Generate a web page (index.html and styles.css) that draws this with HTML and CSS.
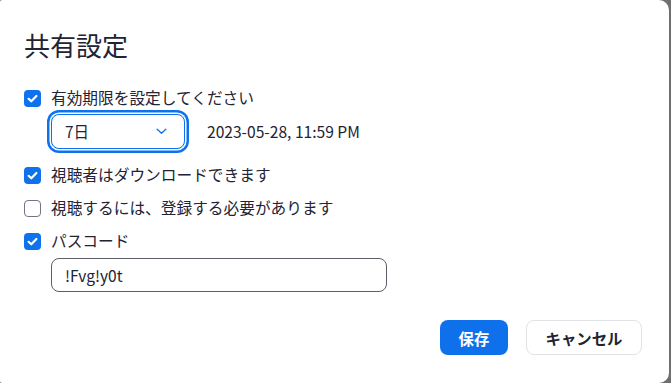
FILE: index.html
```html
<!DOCTYPE html>
<html lang="ja">
<head>
<meta charset="utf-8">
<link rel="stylesheet" href="styles.css">
</head>
<body>
<div class="dialog">
  <h1 class="title">共有設定</h1>
  <label class="row row-first">
    <span class="cb on"><svg viewBox="0 0 17 17" width="17" height="17"><path d="M4.6 8.8 L7.3 11.3 L12.4 6" fill="none" stroke="#fff" stroke-width="2.2" stroke-linecap="round" stroke-linejoin="round"/></svg></span>
    <span class="lbl">有効期限を設定してください</span>
  </label>
  <div class="sel-row">
    <div class="select">
      <span class="sel-text">7日</span>
      <svg class="chev" viewBox="0 0 12 8" width="11" height="7"><path d="M1 1.5 L6 6 L11 1.5" fill="none" stroke="#0e72ed" stroke-width="1.5" stroke-linecap="round" stroke-linejoin="round"/></svg>
    </div>
    <span class="date">2023-05-28, 11:59 PM</span>
  </div>
  <label class="row row-second">
    <span class="cb on"><svg viewBox="0 0 17 17" width="17" height="17"><path d="M4.6 8.8 L7.3 11.3 L12.4 6" fill="none" stroke="#fff" stroke-width="2.2" stroke-linecap="round" stroke-linejoin="round"/></svg></span>
    <span class="lbl">視聴者はダウンロードできます</span>
  </label>
  <label class="row row-next">
    <span class="cb off"></span>
    <span class="lbl">視聴するには、登録する必要があります</span>
  </label>
  <label class="row row-next">
    <span class="cb on"><svg viewBox="0 0 17 17" width="17" height="17"><path d="M4.6 8.8 L7.3 11.3 L12.4 6" fill="none" stroke="#fff" stroke-width="2.2" stroke-linecap="round" stroke-linejoin="round"/></svg></span>
    <span class="lbl">パスコード</span>
  </label>
  <div class="input">!Fvg!y0t</div>
  <div class="actions">
    <button class="btn primary">保存</button>
    <button class="btn secondary">キャンセル</button>
  </div>
</div>
</body>
</html>
```
FILE: styles.css
```css
html, body {
  margin: 0;
  padding: 0;
  background: #6f6f72;
}
body {
  width: 671px;
  height: 383px;
  overflow: hidden;
  font-family: "Noto Sans CJK JP", "Noto Sans", sans-serif;
  color: #232333;
}
.dialog {
  width: 669px;
  height: 383px;
  box-sizing: border-box;
  background: #fff;
  border-radius: 2px 10px 10px 2px;
  padding: 29px 27px 0 24px;
  display: flex;
  flex-direction: column;
}
.title {
  margin: 0;
  font-size: 26px;
  font-weight: 400;
  line-height: 32px;
  height: 32px;
}
.row {
  display: flex;
  align-items: center;
  height: 24px;
  gap: 10px;
}
.row-first { margin-top: 25px; }
.row-second { margin-top: 11px; }
.row-next { margin-top: 9px; }
.cb {
  width: 17px;
  height: 17px;
  box-sizing: border-box;
  border-radius: 4px;
  flex: none;
  display: flex;
}
.cb.on { background: #0e72ed; }
.cb.off { border: 1px solid #747487; background: #fff; }
.lbl {
  font-size: 15.7px;
  line-height: 24px;
  white-space: nowrap;
}
.sel-row {
  display: flex;
  align-items: center;
  height: 42px;
  padding-left: 27px;
  gap: 22px;
}
.select {
  width: 134px;
  height: 35px;
  box-sizing: border-box;
  border: 1px solid #0e72ed;
  border-radius: 8px;
  box-shadow: 0 0 0 1.5px #fff, 0 0 0 4px #0e72ed;
  display: flex;
  align-items: center;
  justify-content: space-between;
  padding: 0 17px 0 13px;
}
.sel-text {
  font-size: 15.5px;
}
.chev { display: block; }
.date {
  font-size: 15.6px;
}
.input {
  margin: 5px 0 0 27px;
  width: 336px;
  height: 34px;
  box-sizing: border-box;
  border: 1px solid #5c5f66;
  border-radius: 8px;
  padding: 0 13px;
  display: flex;
  align-items: center;
  font-size: 15.5px;
}
.actions {
  margin-top: 28px;
  display: flex;
  justify-content: flex-end;
  gap: 18px;
}
.btn {
  height: 35px;
  border-radius: 8px;
  font-family: "Noto Sans CJK JP", "Noto Sans", sans-serif;
  font-size: 15.4px;
  font-weight: 700;
  box-sizing: border-box;
  padding: 0;
}
.primary {
  width: 68px;
  background: #0e71eb;
  color: #fff;
  border: none;
}
.secondary {
  width: 116px;
  background: #fff;
  color: #232333;
  border: 1px solid #dfe3e8;
}
```
